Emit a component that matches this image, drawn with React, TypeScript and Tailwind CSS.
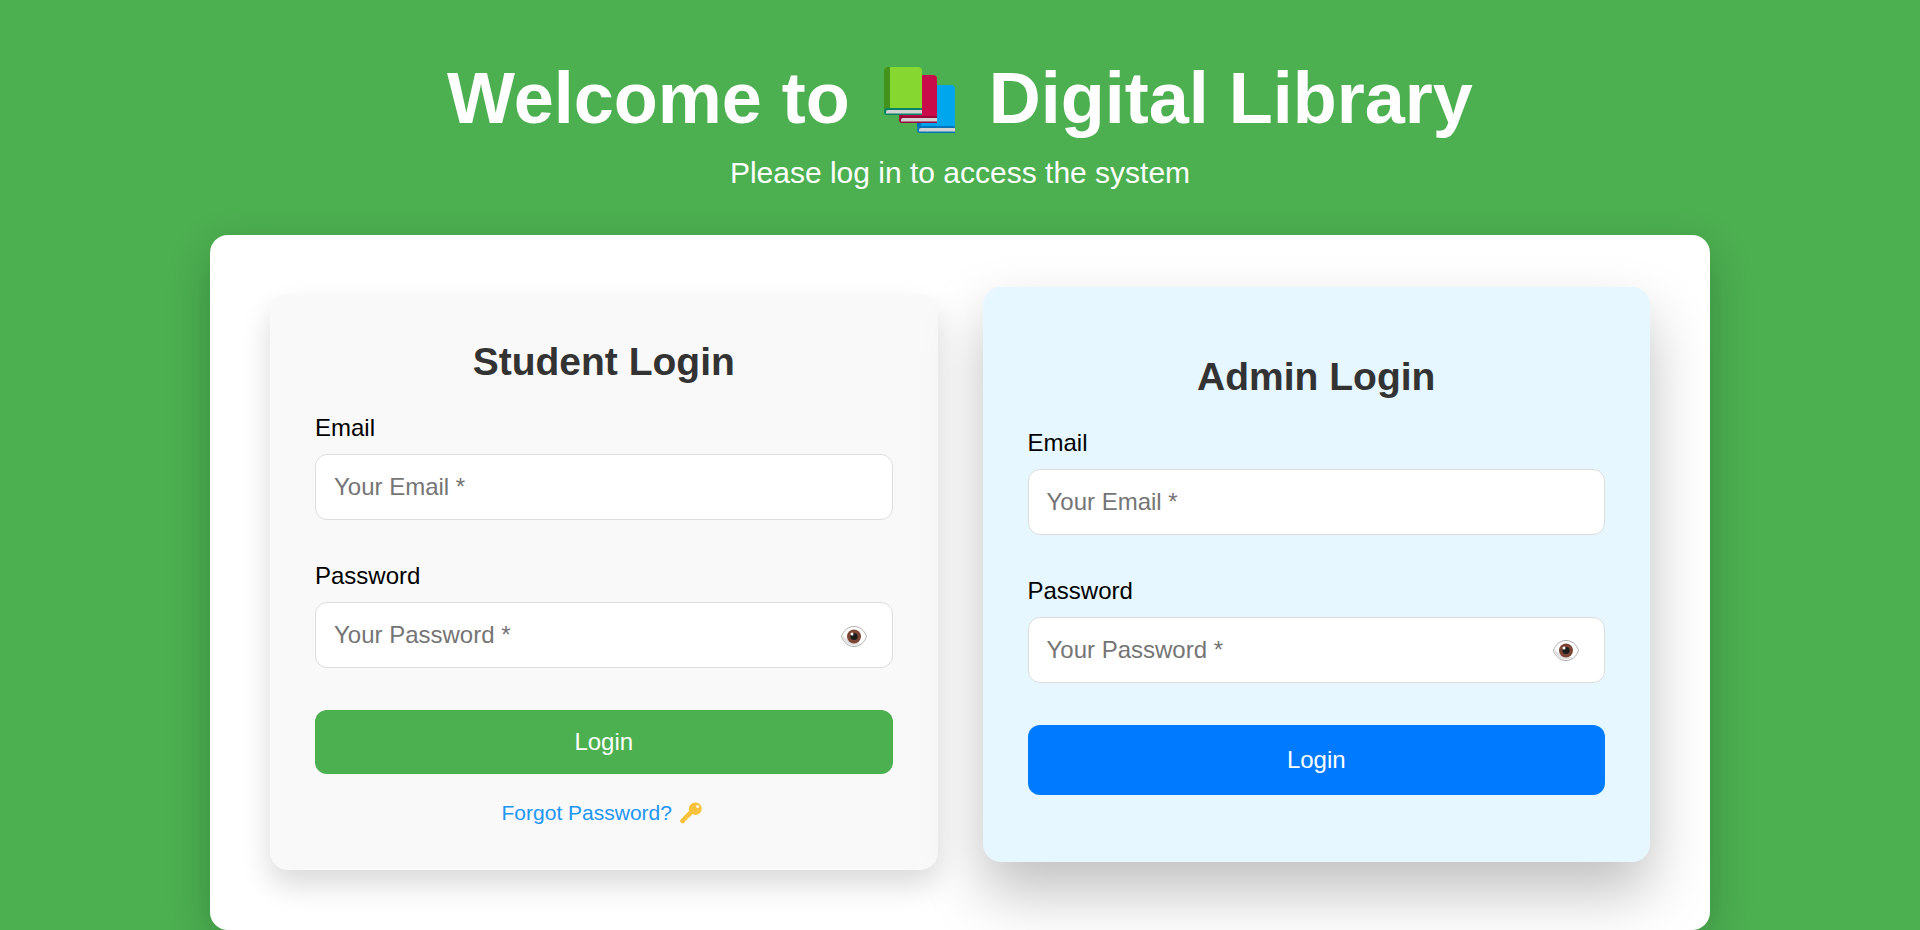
import { useState } from "react";

function BooksIcon() {
  return (
    <svg viewBox="0 0 71 66" className="mx-3.5 mt-1 inline-block h-[66px] w-[71px] shrink-0" aria-hidden="true">
      <path d="M36 18h31a4 4 0 0 1 4 4v38H33V22z" fill="#00a6ed" />
      <path d="M33 20h4v40h-4z" fill="#0074ba" />
      <path d="M36 59h35v7H36a3 3 0 0 1-3-3v-1a3 3 0 0 1 3-3z" fill="#0074ba" />
      <path d="M37 61h34v3.500H35V63a2 2 0 0 1 2-2z" fill="#d3d3d3" />
      <path d="M19 8h30a4 4 0 0 1 4 4v38H15V12z" fill="#ca0b4a" />
      <path d="M15 12h4v38h-4z" fill="#990838" />
      <path d="M18 49h35v7H18a3 3 0 0 1-3-3v-1a3 3 0 0 1 3-3z" fill="#990838" />
      <path d="M19 51h34v3.500H17V53a2 2 0 0 1 2-2z" fill="#d3d3d3" />
      <path d="M4 0h30a4 4 0 0 1 4 4v38H0V4a4 4 0 0 1 4-4z" fill="#86d72f" />
      <path d="M4 0h2v42H0V4a4 4 0 0 1 4-4z" fill="#44911b" />
      <path d="M3 41h35v7H3a3 3 0 0 1-3-3v-1a3 3 0 0 1 3-3z" fill="#008463" />
      <path d="M4 43h34v3.500H2V45a2 2 0 0 1 2-2z" fill="#d3d3d3" />
    </svg>
  );
}

function EyeIcon() {
  return (
    <svg viewBox="0 0 26 21" className="block h-[21px] w-[26px]" aria-hidden="true">
      <path
        d="M.5 10.500C2.500 4.500 7 .500 13 .500S23.500 4.500 25.500 10.500C23.500 16.500 19 20.500 13 20.500S2.500 16.500 .5 10.500z"
        fill="#fff"
        stroke="#9b9b9b"
        strokeWidth=".8"
      />
      <path d="M1.500 10.500c2 5.500 6 9 11.500 9 3 0 5-1 7-2.500-6 .5-13-1-18-7.500z" fill="#e1e1e1" />
      <circle cx="13" cy="10.500" r="7" fill="#7d4533" />
      <circle cx="13" cy="10.500" r="3.600" fill="#1c1c1c" />
      <circle cx="11" cy="8" r="1.500" fill="#fff" />
    </svg>
  );
}

function KeyIcon() {
  return (
    <svg viewBox="0 0 22 22" className="mx-1 block h-[22px] w-[22px]" aria-hidden="true">
      <path
        fillRule="evenodd"
        fill="#f9c23c"
        d="M15 .500a6.200 6.200 0 0 0-5.800 8.300L.900 17.200a2.400 2.400 0 0 0 0 3.400 2.400 2.400 0 0 0 3.600-.200l1-1.900 1.700-.6.500-1.800 1.700-.6 3.100-3.400A6.200 6.200 0 1 0 15 .500zm2.600 2.600a1.500 1.500 0 1 1 0 3 1.500 1.500 0 0 1 0-3z"
      />
    </svg>
  );
}

const inputClass =
  "block h-[66px] w-full rounded-xl border border-[#dddddd] bg-white px-[18px] text-2xl text-black outline-none placeholder:text-[#757575] focus:border-[#4caf50]";

function LoginFields({ id }: { id: string }) {
  const [visible, setVisible] = useState(false);
  return (
    <>
      <label htmlFor={`${id}-email`} className="mb-3 block text-2xl leading-7">
        Email
      </label>
      <input id={`${id}-email`} type="email" placeholder="Your Email *" className={inputClass} />
      <label htmlFor={`${id}-password`} className="mt-[42px] mb-3 block text-2xl leading-7">
        Password
      </label>
      <div className="relative mb-[42px]">
        <input
          id={`${id}-password`}
          type={visible ? "text" : "password"}
          placeholder="Your Password *"
          className={inputClass}
        />
        <button
          type="button"
          aria-label="Toggle password visibility"
          onClick={() => setVisible(!visible)}
          className="absolute inset-y-0 right-[26px] flex cursor-pointer items-center pt-0.5"
        >
          <EyeIcon />
        </button>
      </div>
    </>
  );
}

export default function App() {
  return (
    <div className="min-h-screen bg-[#4caf50] px-5 pt-14 font-['Liberation_Sans',Arial,sans-serif] text-black">
      <header className="text-center text-white">
        <h1 className="flex flex-wrap items-center justify-center gap-x-5 text-7xl leading-[84px] font-bold">
          <span>Welcome to</span>
          <BooksIcon />
          <span>Digital Library</span>
        </h1>
        <p className="mt-[15px] text-3xl leading-9">Please log in to access the system</p>
      </header>
      <main className="mx-auto mt-11 grid max-w-[1500px] gap-[45px] rounded-[18px] bg-white p-[60px] shadow-[0_15px_45px_rgba(0,0,0,0.2)] lg:grid-cols-2">
        <form
          onSubmit={(e) => e.preventDefault()}
          className="flex flex-col justify-center rounded-[18px] bg-[#f9f9f9] p-[45px] shadow-[0_15px_30px_rgba(0,0,0,0.15)]"
        >
          <h2 className="mb-[30px] text-center text-[39px] leading-[44px] font-bold text-[#333333]">Student Login</h2>
          <LoginFields id="student" />
          <button type="submit" className="h-16 cursor-pointer rounded-xl bg-[#4caf50] text-2xl text-white">
            Login
          </button>
          <a
            href="#forgot"
            className="mt-[27px] flex items-center justify-center gap-1 text-[21px] leading-6 text-[#2196f3]"
          >
            Forgot Password?
            <KeyIcon />
          </a>
        </form>
        <form
          onSubmit={(e) => e.preventDefault()}
          className="flex -translate-y-2 flex-col justify-center rounded-[18px] bg-[#e6f7ff] p-[45px] shadow-[0_30px_60px_rgba(0,0,0,0.25)]"
        >
          <h2 className="mb-[30px] text-center text-[39px] leading-[44px] font-bold text-[#333333]">Admin Login</h2>
          <LoginFields id="admin" />
          <button type="submit" className="h-[70px] cursor-pointer rounded-xl bg-[#007bff] text-2xl text-white">
            Login
          </button>
        </form>
      </main>
    </div>
  );
}
